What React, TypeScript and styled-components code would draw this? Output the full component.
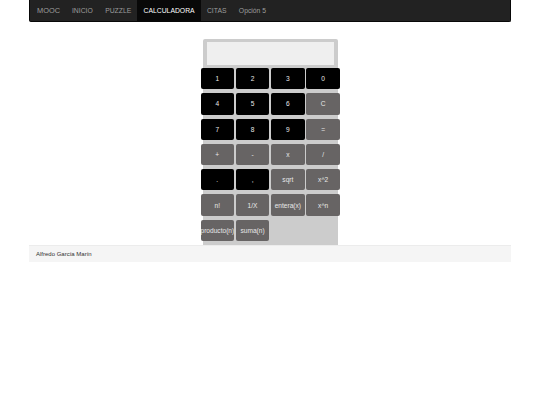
import styled, { createGlobalStyle } from 'styled-components';

const GlobalStyle = createGlobalStyle`
	html, body {
		margin: 0;
		padding: 0;
		background: #fff;
		font-family: "Liberation Sans", Arial, sans-serif;
	}
	* {
		box-sizing: border-box;
	}
`;

type Key = { label: string; dark?: boolean };

const keys: Key[] = [
	{ label: '1', dark: true }, { label: '2', dark: true }, { label: '3', dark: true }, { label: '0', dark: true },
	{ label: '4', dark: true }, { label: '5', dark: true }, { label: '6', dark: true }, { label: 'C' },
	{ label: '7', dark: true }, { label: '8', dark: true }, { label: '9', dark: true }, { label: '=' },
	{ label: '+' }, { label: '-' }, { label: 'x' }, { label: '/' },
	{ label: '.', dark: true }, { label: ',', dark: true }, { label: 'sqrt' }, { label: 'x^2' },
	{ label: 'n!' }, { label: '1/X' }, { label: 'entera(x)' }, { label: 'x^n' },
	{ label: 'producto(n)' }, { label: 'suma(n)' },
];

const links = ['INICIO', 'PUZZLE', 'CALCULADORA', 'CITAS', 'Opción 5'];

const App = () => (
	<>
		<GlobalStyle />
		<Container>
			<NavBar>
				<Brand>MOOC</Brand>
				{links.map((l) => (
					<NavLink key={l} $active={l === 'CALCULADORA'}>{l}</NavLink>
				))}
			</NavBar>
			<Main>
				<Calculator>
					<Display />
					<Keypad>
						{keys.map((k) => (
							<CalcButton key={k.label} $dark={k.dark}>{k.label}</CalcButton>
						))}
					</Keypad>
				</Calculator>
			</Main>
			<Footer>Alfredo García Marín</Footer>
		</Container>
	</>
);

export default App;

const Container = styled.div`
	width: 482px;
	margin: 0 auto;
`;

const NavBar = styled.nav`
	display: flex;
	align-items: stretch;
	height: 21.5px;
	background: #222;
	border: 1px solid #080808;
	border-top: none;
	border-radius: 0 0 2px 2px;
`;

const Brand = styled.a`
	display: flex;
	align-items: center;
	padding: 0 5.8px 0 7px;
	font-size: 7.4px;
	color: #9d9d9d;
`;

const NavLink = styled.a<{ $active?: boolean }>`
	display: flex;
	align-items: center;
	padding: 0 6.2px;
	font-size: 6.8px;
	color: ${(p) => (p.$active ? '#fff' : '#9d9d9d')};
	background: ${(p) => (p.$active ? '#080808' : 'transparent')};
`;

const Main = styled.div`
	display: flex;
	justify-content: center;
	padding-top: 17px;
`;

const Calculator = styled.div`
	width: 135px;
	background: #ccc;
	border-radius: 2px 2px 0 0;
	padding: 3.5px 0 4px;
	display: flex;
	flex-direction: column;
	align-items: center;
`;

const Display = styled.div`
	width: 127px;
	height: 23px;
	background: #efefef;
	margin-bottom: 3px;
`;

const Keypad = styled.div`
	width: 139px;
	display: grid;
	grid-template-columns: repeat(4, 33.5px);
	grid-auto-rows: 21.3px;
	column-gap: 1.8px;
	row-gap: 4px;
`;

const CalcButton = styled.button<{ $dark?: boolean }>`
	padding: 0;
	border: none;
	border-radius: 2px;
	background: ${(p) => (p.$dark ? '#000' : '#676464')};
	color: #e8e8e8;
	font-family: "Liberation Sans", Arial, sans-serif;
	font-size: 6.6px;
	white-space: nowrap;
	overflow: hidden;
`;

const Footer = styled.footer`
	height: 16.5px;
	display: flex;
	align-items: center;
	padding-left: 7px;
	background: #f5f5f5;
	border-top: 1px solid #ececec;
	font-size: 6px;
	color: #333;
`;
